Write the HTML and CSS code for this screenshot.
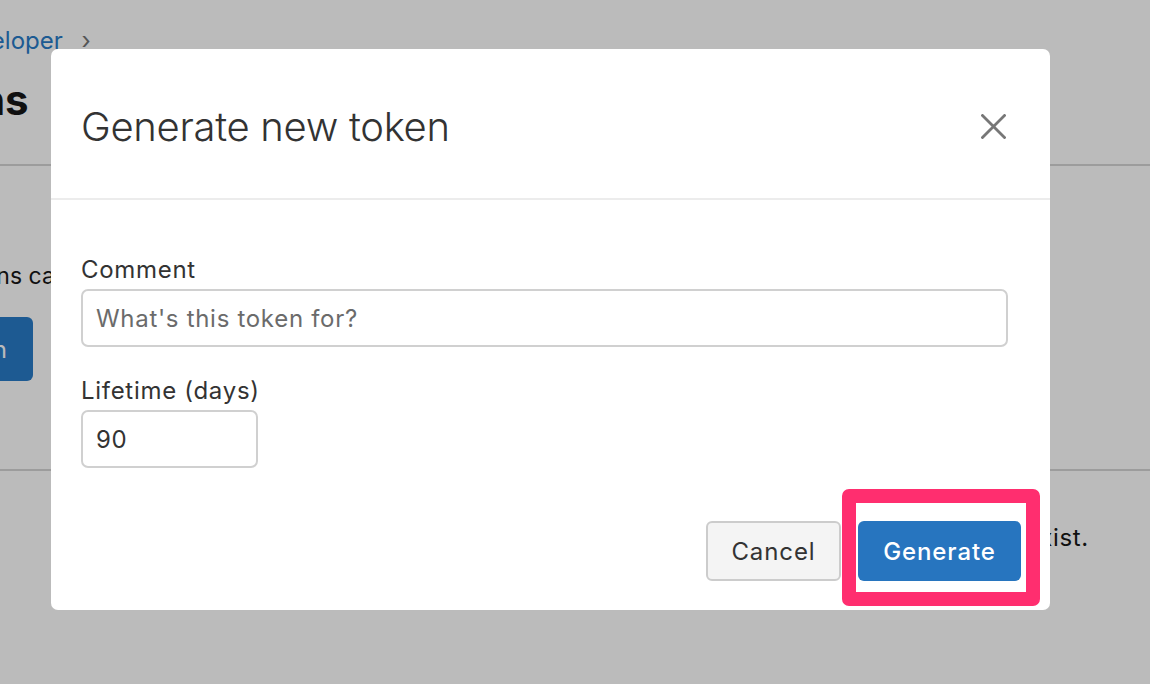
FILE: index.html
```html
<!DOCTYPE html>
<html lang="en">
<head>
    <meta charset="UTF-8">
    <meta name="viewport" content="width=device-width, initial-scale=1.0">
    <title>Developer - Tokens</title>
    <link rel="stylesheet" href="styles.css">
</head>
<body>
    <div class="page">
        <div class="breadcrumb">
            <a href="#">Developer</a>
            <span class="crumb-sep">&rsaquo;</span>
        </div>
        <h1 class="page-title">Tokens</h1>
        <div class="section">
            <p class="intro">Tokens can be used to access the API.</p>
            <button class="btn-primary">Generate new token</button>
        </div>
        <div class="section last">
            <p class="empty">No tokens exist.</p>
        </div>
    </div>

    <div class="backdrop"></div>

    <div class="modal">
        <div class="modal-header">
            <h2>Generate new token</h2>
            <button class="close" aria-label="Close">
                <svg width="25" height="25" viewBox="0 0 25 25">
                    <path d="M1.5 1.5 L23.5 23.5 M23.5 1.5 L1.5 23.5" stroke="#777" stroke-width="2.8" stroke-linecap="square"/>
                </svg>
            </button>
        </div>

        <div class="modal-body">
            <label for="comment">Comment</label>
            <input type="text" id="comment" class="field field-wide" placeholder="What's this token for?">

            <label for="lifetime">Lifetime (days)</label>
            <input type="text" id="lifetime" class="field field-short" value="90">
        </div>

        <div class="modal-footer">
            <button class="btn btn-cancel">Cancel</button>
            <button class="btn btn-generate">Generate</button>
        </div>

        <div class="highlight"></div>
    </div>
</body>
</html>
```

FILE: styles.css
```css
body {
    font-family: Inter, "Noto Sans", sans-serif;
    background-color: white;
    color: #171717;
    margin: 0;
    padding: 0;
    overflow: hidden;
}
.page {
    margin-left: -60px;
    padding-top: 26px;
}
.breadcrumb {
    font-size: 24px;
    line-height: 30px;
    margin-left: 7px;
}
.breadcrumb a {
    color: #287bc8;
    text-decoration: none;
}
.crumb-sep {
    color: #747474;
    margin-left: 12px;
}
.page-title {
    font-size: 42px;
    font-weight: 700;
    margin: 21px 0 0 -60px;
    line-height: 46px;
    padding-bottom: 41px;
    border-bottom: 2px solid #d5d5d5;
}
.section {
    border-bottom: 2px solid #d5d5d5;
    padding-top: 96px;
}
.section.last {
    border-bottom: none;
    padding-top: 53px;
}
.intro {
    font-size: 23px;
    line-height: 28px;
    margin: 0 0 0 4px;
}
.btn-primary {
    display: block;
    background-color: #287bc8;
    color: white;
    border: none;
    border-radius: 6px;
    font: inherit;
    font-size: 24px;
    height: 64px;
    padding: 0 26px;
    margin: 27px 0 88px -187px;
}
.empty {
    font-size: 24px;
    line-height: 28px;
    letter-spacing: 0.7px;
    text-align: right;
    margin: 0 61px 0 0;
}

.backdrop {
    position: fixed;
    inset: 0;
    background-color: rgba(0, 0, 0, 0.267);
}

.modal {
    position: fixed;
    left: 51px;
    top: 49px;
    width: 999px;
    height: 561px;
    background-color: white;
    border-radius: 7px;
    display: flex;
    flex-direction: column;
}
.modal-header {
    height: 151px;
    padding: 6px 44px 0 30px;
    box-sizing: border-box;
    border-bottom: 2px solid #ececec;
    display: flex;
    align-items: center;
    justify-content: space-between;
}
.modal-header h2 {
    margin: 0;
    font-family: Inter, sans-serif;
    font-weight: 300;
    font-size: 40px;
    color: #333;
    letter-spacing: -0.3px;
}
.close {
    background: none;
    border: none;
    padding: 0;
    display: flex;
}
.modal-body {
    padding: 56px 42px 0 30px;
    flex: 1;
}
.modal-body label {
    display: block;
    font-size: 24px;
    line-height: 28px;
    letter-spacing: 0.7px;
    color: #333;
    margin-bottom: 5px;
}
.field {
    display: block;
    box-sizing: border-box;
    height: 58px;
    border: 2px solid #d0d0d0;
    border-radius: 7px;
    padding: 0 13px;
    font-family: inherit;
    font-size: 24px;
    letter-spacing: 0.7px;
    color: #333;
    margin-bottom: 30px;
}
.field::placeholder {
    color: #6b6b6b;
}
.field-wide {
    width: 100%;
}
.field-short {
    width: 177px;
}
.modal-footer {
    display: flex;
    justify-content: flex-end;
    gap: 17px;
    padding: 0 29px 29px 0;
}
.btn {
    font-family: inherit;
    font-size: 24px;
    letter-spacing: 0.9px;
    height: 60px;
    border-radius: 6px;
}
.btn-cancel {
    width: 135px;
    background-color: #f4f4f4;
    border: 2px solid #cccccc;
    color: #333;
}
.btn-generate {
    width: 163px;
    background-color: #2775bf;
    border: none;
    color: white;
    font-weight: 500;
}
.highlight {
    position: absolute;
    left: 791px;
    top: 440px;
    width: 198px;
    height: 117px;
    box-sizing: border-box;
    border: 14px solid #ff2e6f;
    border-radius: 7px;
}
```
